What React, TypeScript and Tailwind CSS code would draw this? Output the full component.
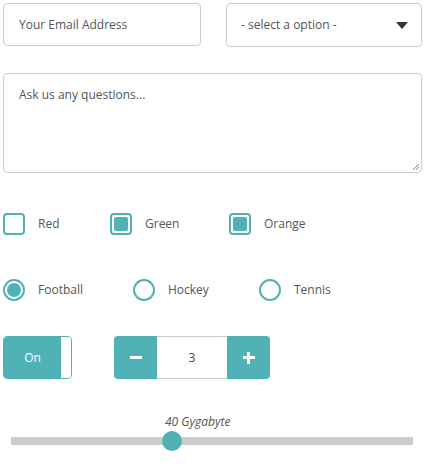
import React from "react";

const teal = "bg-[#50b1b7]";

export default function App() {
  return (
    <div className="w-[425px] h-[464px] bg-white px-[3px] pt-[3px] text-[12px] text-[#555]" style={{ fontFamily: '"Open Sans", sans-serif' }}>
      <div className="grid grid-cols-[198px_196px] gap-[25px]">
        <div className="h-[43px] border border-[#ccc] rounded-[4px] flex items-center pl-[15px]">
          <span>Your Email Address</span>
        </div>
        <div className="h-[44px] border border-[#ccc] rounded-[4px] flex items-center pl-[14px] pr-[13px] justify-between">
          <span>- select a option -</span>
          <svg width="12" height="7" viewBox="0 0 12 7"><path d="M0 0 L12 0 L6 7 Z" fill="#333" /></svg>
        </div>
      </div>
      <div className="mt-[26px] h-[100px] border border-[#ccc] rounded-[4px] relative pl-[15px] pt-[12px]">
        <span>Ask us any questions...</span>
        <svg className="absolute right-[1px] bottom-[1px]" width="8" height="8" viewBox="0 0 8 8">
          <path d="M7 1 L1 7 M7 4 L4 7" stroke="#888" strokeWidth="1" />
        </svg>
      </div>
      <div className="mt-[39px] flex items-center h-[23px]">
        <div className="flex items-center w-[107px]">
          <div className="w-[22px] h-[22px] border-2 border-[#50b1b7] rounded-[4px]" />
          <span className="ml-[13px]">Red</span>
        </div>
        <div className="flex items-center w-[119px]">
          <div className="w-[22px] h-[22px] border-2 border-[#50b1b7] rounded-[4px] p-[2px]">
            <div className={`w-full h-full ${teal} rounded-[2px]`} />
          </div>
          <span className="ml-[13px]">Green</span>
        </div>
        <div className="flex items-center">
          <div className="w-[22px] h-[22px] border-2 border-[#50b1b7] rounded-[4px] p-[2px]">
            <div className={`w-full h-full ${teal} rounded-[2px]`} />
          </div>
          <span className="ml-[13px]">Orange</span>
        </div>
      </div>
      <div className="mt-[43px] flex items-center h-[23px]">
        <div className="flex items-center w-[130px]">
          <div className="w-[22px] h-[22px] border-2 border-[#50b1b7] rounded-full p-[2px]">
            <div className={`w-full h-full ${teal} rounded-full`} />
          </div>
          <span className="ml-[13px]">Football</span>
        </div>
        <div className="flex items-center w-[126px]">
          <div className="w-[22px] h-[22px] border-2 border-[#50b1b7] rounded-full" />
          <span className="ml-[13px]">Hockey</span>
        </div>
        <div className="flex items-center">
          <div className="w-[22px] h-[22px] border-2 border-[#50b1b7] rounded-full" />
          <span className="ml-[13px]">Tennis</span>
        </div>
      </div>
      <div className="mt-[35px] flex items-center">
        <div className="w-[69px] h-[43px] border border-[#50b1b7] rounded-[4px] flex overflow-hidden">
          <div className={`flex-1 ${teal} flex items-center justify-center text-white`}>On</div>
          <div className="w-[10px] bg-white" />
        </div>
        <div className="ml-[42px] w-[156px] h-[43px] flex rounded-[4px] overflow-hidden">
          <div className={`w-[43px] ${teal} flex items-center justify-center`}>
            <div className="w-[12px] h-[3px] bg-white" />
          </div>
          <div className="flex-1 border-y border-[#ccc] flex items-center justify-center text-[#444]">3</div>
          <div className={`w-[43px] ${teal} flex items-center justify-center relative`}>
            <div className="w-[12px] h-[3px] bg-white" />
            <div className="absolute w-[3px] h-[12px] bg-white" />
          </div>
        </div>
      </div>
      <div className="mt-[34px] relative h-[50px]">
        <div className="absolute left-[162px] top-0 italic text-[#555] text-[12px]">40 Gygabyte</div>
        <div className="absolute left-[8px] right-[9px] top-[24px] h-[8px] bg-[#ccc]" />
        <div className={`absolute left-[159px] top-[18px] w-[20px] h-[20px] rounded-full ${teal}`} />
      </div>
    </div>
  );
}
